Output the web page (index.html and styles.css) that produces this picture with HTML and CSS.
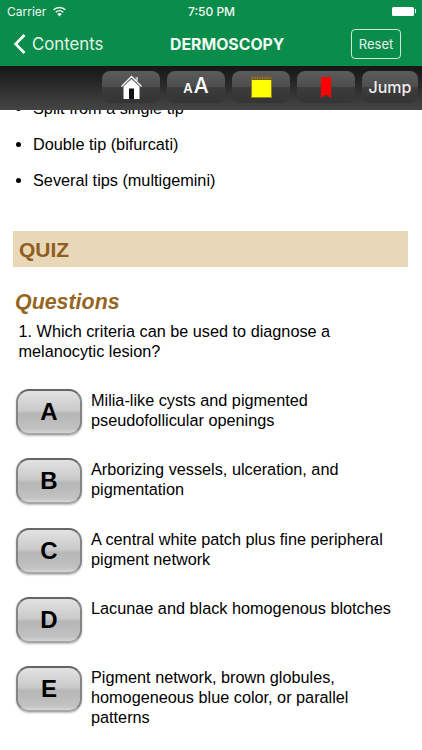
FILE: index.html
```html
<!DOCTYPE html>
<html lang="en">
<head>
<meta charset="utf-8">
<title>Dermoscopy</title>
<link rel="stylesheet" href="styles.css">
</head>
<body>
<div class="app">
  <header class="green">
    <div class="status">
      <div class="status-left">
        <span>Carrier</span>
        <svg class="wifi" width="15" height="11" viewBox="0 0 15 11"><path d="M7.5 10.6 5.3 8.1a3.2 3.2 0 0 1 4.4 0z" fill="#fff"/><path d="M3.8 6.3a5.4 5.4 0 0 1 7.4 0M1.6 3.8a8.6 8.6 0 0 1 11.8 0" fill="none" stroke="#fff" stroke-width="1.5"/></svg>
      </div>
      <div class="status-time">7:50 PM</div>
      <div class="status-right">
        <span class="battery"></span><span class="battery-tip"></span>
      </div>
    </div>
    <nav class="nav">
      <a class="back">
        <svg width="14" height="22" viewBox="0 0 14 22"><path d="M11.5 2 2.6 11l8.900 9" fill="none" stroke="#fff" stroke-width="2.6"/></svg>
        <span>Contents</span>
      </a>
      <h1 class="title">DERMOSCOPY</h1>
      <button class="reset">Reset</button>
    </nav>
  </header>
  <div class="toolbar">
    <div class="tool">
      <svg width="21" height="24" viewBox="0 0 21 24"><rect x="14.500" y="2" width="2.500" height="4" fill="#bbb"/><path d="M.5 11.500 10.500 1.500l10 10" fill="none" stroke="#fff" stroke-width="1.300"/><path d="M2.500 11.500 10.500 4l8 7.500V24h-16z" fill="#fff"/><rect x="8" y="13.500" width="5" height="10.500" fill="#111"/></svg>
    </div>
    <div class="tool tool-font"><span class="small-a">A</span><span class="big-a">A</span></div>
    <div class="tool">
      <svg width="21" height="22" viewBox="0 0 21 22"><rect x=".5" y=".5" width="20" height="21" fill="#ffff00" stroke="#8f8020"/><rect x="0" y="0" width="21" height="4" fill="#6e5c2c"/><path d="M1 2h19" stroke="#c2a84e" stroke-dasharray="1 1.500"/></svg>
    </div>
    <div class="tool">
      <svg width="10" height="21" viewBox="0 0 10 21"><path d="M0 0h10v21l-5-3.500-5 3.500z" fill="#ff0000"/></svg>
    </div>
    <div class="tool tool-jump">Jump</div>
  </div>
  <main class="content">
    <div class="scroll">
      <ul class="bullets">
        <li>Split from a single tip</li>
        <li>Double tip (bifurcati)</li>
        <li>Several tips (multigemini)</li>
      </ul>
      <h2 class="quiz">QUIZ</h2>
      <h3 class="questions">Questions</h3>
      <p class="question">1. Which criteria can be used to diagnose a melanocytic lesion?</p>
      <div class="answers">
        <div class="answer"><button class="key">A</button><p>Milia-like cysts and pigmented pseudofollicular openings</p></div>
        <div class="answer"><button class="key">B</button><p>Arborizing vessels, ulceration, and pigmentation</p></div>
        <div class="answer"><button class="key">C</button><p>A central white patch plus fine peripheral pigment network</p></div>
        <div class="answer"><button class="key">D</button><p>Lacunae and black homogenous blotches</p></div>
        <div class="answer"><button class="key">E</button><p>Pigment network, brown globules, homogeneous blue color, or parallel patterns</p></div>
      </div>
    </div>
  </main>
</div>
</body>
</html>
```
FILE: styles.css
```css
* { box-sizing: border-box; }
html, body { margin: 0; padding: 0; background: #fff; }
.app { width: 422px; height: 750px; overflow: hidden; display: flex; flex-direction: column; font-family: "Liberation Sans", Arial, sans-serif; color: #000; }
.green { height: 66px; background: #0a8c4a; color: #fff; font-family: Inter, "Liberation Sans", sans-serif; flex: none; }
.status { height: 22px; display: grid; grid-template-columns: 1fr auto 1fr; align-items: center; padding: 0 6px 0 7px; font-size: 12px; color: #f0f8f3; }
.status-left { display: flex; align-items: center; gap: 6px; }
.status-right { display: flex; justify-content: flex-end; align-items: center; }
.status-time { font-weight: 500; }
.battery { width: 22px; height: 9px; background: #fff; border-radius: 1.500px; }
.battery-tip { width: 1.500px; height: 4px; background: #fff; margin-left: 1px; }
.nav { height: 44px; display: grid; grid-template-columns: auto 1fr auto; align-items: center; padding: 0 21px 0 13px; }
.back { display: flex; align-items: center; gap: 5px; font-size: 16.800px; color: #e6f3ec; }
.title { margin: 0; text-align: center; font-size: 15.800px; font-weight: 700; color: #f2f9f5; font-family: Inter, sans-serif; }
.reset { width: 50px; height: 30px; padding: 0; background: none; border: 1px solid #cfe8da; border-radius: 4px; color: #e6f3ec; font: 13px Inter, sans-serif; }
.toolbar { height: 44px; flex: none; display: flex; justify-content: flex-end; align-items: center; gap: 7px; padding: 0 4px 2px 0; background: linear-gradient(#161616, #454545); }
.tool { height: 32px; width: 58px; border-radius: 8px; background: linear-gradient(#5c5c5c 0, #4e4e4e 48%, #3c3c3c 52%, #343434 100%); display: flex; align-items: center; justify-content: center; color: #fff; }
.tool-jump { font: 500 16px Inter, sans-serif; width: 56px; color: #eee; }
.tool-font { align-items: baseline; padding-top: 2px; font-family: Inter, sans-serif; }
.small-a { font-size: 13px; font-weight: 600; }
.big-a { font-size: 21px; font-weight: 500; margin-left: 1px; }
.content { flex: 1; overflow: hidden; min-height: 0; }
.scroll { margin-top: -20px; }
.bullets { margin: 0; padding: 0 0 0 33px; list-style: disc; font-size: 16.250px; line-height: 36px; }
.quiz { margin: 33px 14px 0 13px; height: 36px; line-height: 37px; padding-left: 6px; background: #e8d7b9; color: #8f5e1e; font-size: 21px; font-weight: 700; }
.questions { margin: 22px 0 0 15px; font-size: 21.400px; line-height: 26px; font-style: italic; font-weight: 700; color: #96651f; }
.question { margin: 6px 40px 0 18.500px; font-size: 16.250px; line-height: 20px; }
.answers { margin-top: 28px; display: flex; flex-direction: column; padding: 0 0 0 16px; }
.answer { display: flex; gap: 9px; height: 69.250px; }
.answer p { margin: 1px 30px 0 0; font-size: 16.250px; line-height: 20px; }
.key { flex: none; width: 66px; height: 46px; padding: 0; border-radius: 13px; border: 2px solid #747474; border-color: #666 #858585 #a6a6a6; background: linear-gradient(#e2e2e2, #cacaca 46%, #b6b6b6 54%, #c2c2c2 90%, #d6d6d6); box-shadow: 0 1px 2px #bbb; font: 700 24px "Liberation Sans", sans-serif; color: #000; }
```
